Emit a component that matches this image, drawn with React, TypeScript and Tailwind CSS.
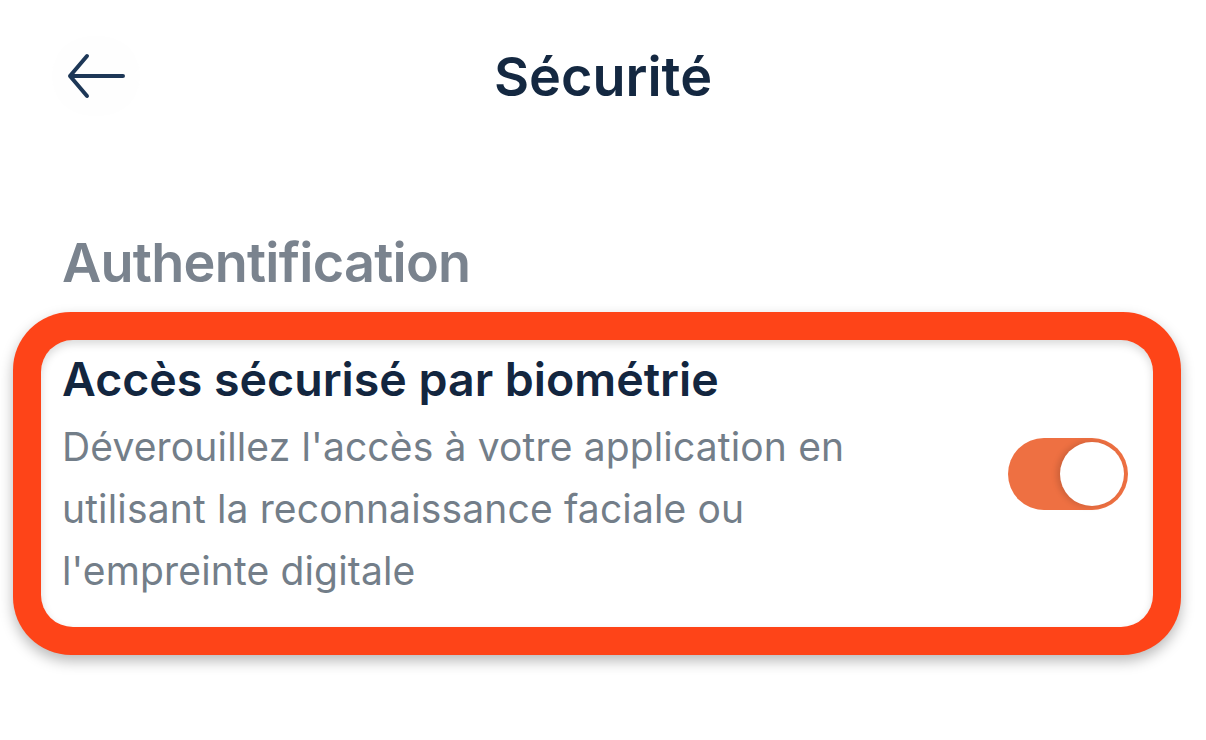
import React from "react";

export default function App() {
  return (
    <div
      className="w-[1206px] h-[740px] bg-white overflow-hidden"
      style={{ fontFamily: "Inter, 'Noto Sans', sans-serif" }}
    >
      {/* Header */}
      <div className="relative h-[152px] flex items-start">
        <div className="absolute left-[52px] top-[36px] w-[88px] h-[80px] rounded-full bg-[#fefefe] flex items-center justify-center">
          <svg width="60" height="46" viewBox="0 0 60 46" fill="none">
            <path
              d="M57 23H4M21 3L4 23L21 43"
              stroke="#1d3757"
              strokeWidth="4"
              strokeLinecap="round"
              strokeLinejoin="round"
            />
          </svg>
        </div>
        <div className="w-full flex justify-center pt-[47px]">
          <span className="text-[54px] leading-[60px] font-semibold text-[#142841]">
            Sécurité
          </span>
        </div>
      </div>

      {/* Section */}
      <div className="px-[62px] pt-[84px]">
        <h2 className="text-[54px] leading-[54px] font-semibold tracking-[-0.75px] text-[#7a838e]">
          Authentification
        </h2>
      </div>

      <div className="mx-[13px] mt-[22px] w-[1168px] rounded-[58px] bg-[#fe4418] p-[28px] shadow-[0_6px_14px_rgba(0,0,0,0.28)]">
        <div className="rounded-[32px] bg-white shadow-[inset_0_4px_8px_rgba(0,0,0,0.15)] flex justify-between pl-[21px] pr-[25px] pt-[12px] pb-[25px]">
          <div className="w-[840px]">
            <div className="text-[46.5px] leading-[54px] font-semibold text-[#13263f]">
              Accès sécurisé par biométrie
            </div>
            <p className="mt-[10px] text-[39px] leading-[62px] tracking-[0.15px] text-[#737e89]">
              Déverouillez l'accès à votre application en utilisant la
              reconnaissance faciale ou l'empreinte digitale
            </p>
          </div>
          <div className="mt-[86px] self-start w-[120px] h-[72px] rounded-full bg-[#ee7042] p-[4px] flex justify-end">
            <div className="w-[64px] h-[64px] rounded-full bg-white shadow-[-3px_0_6px_rgba(0,0,0,0.15)]" />
          </div>
        </div>
      </div>
    </div>
  );
}
